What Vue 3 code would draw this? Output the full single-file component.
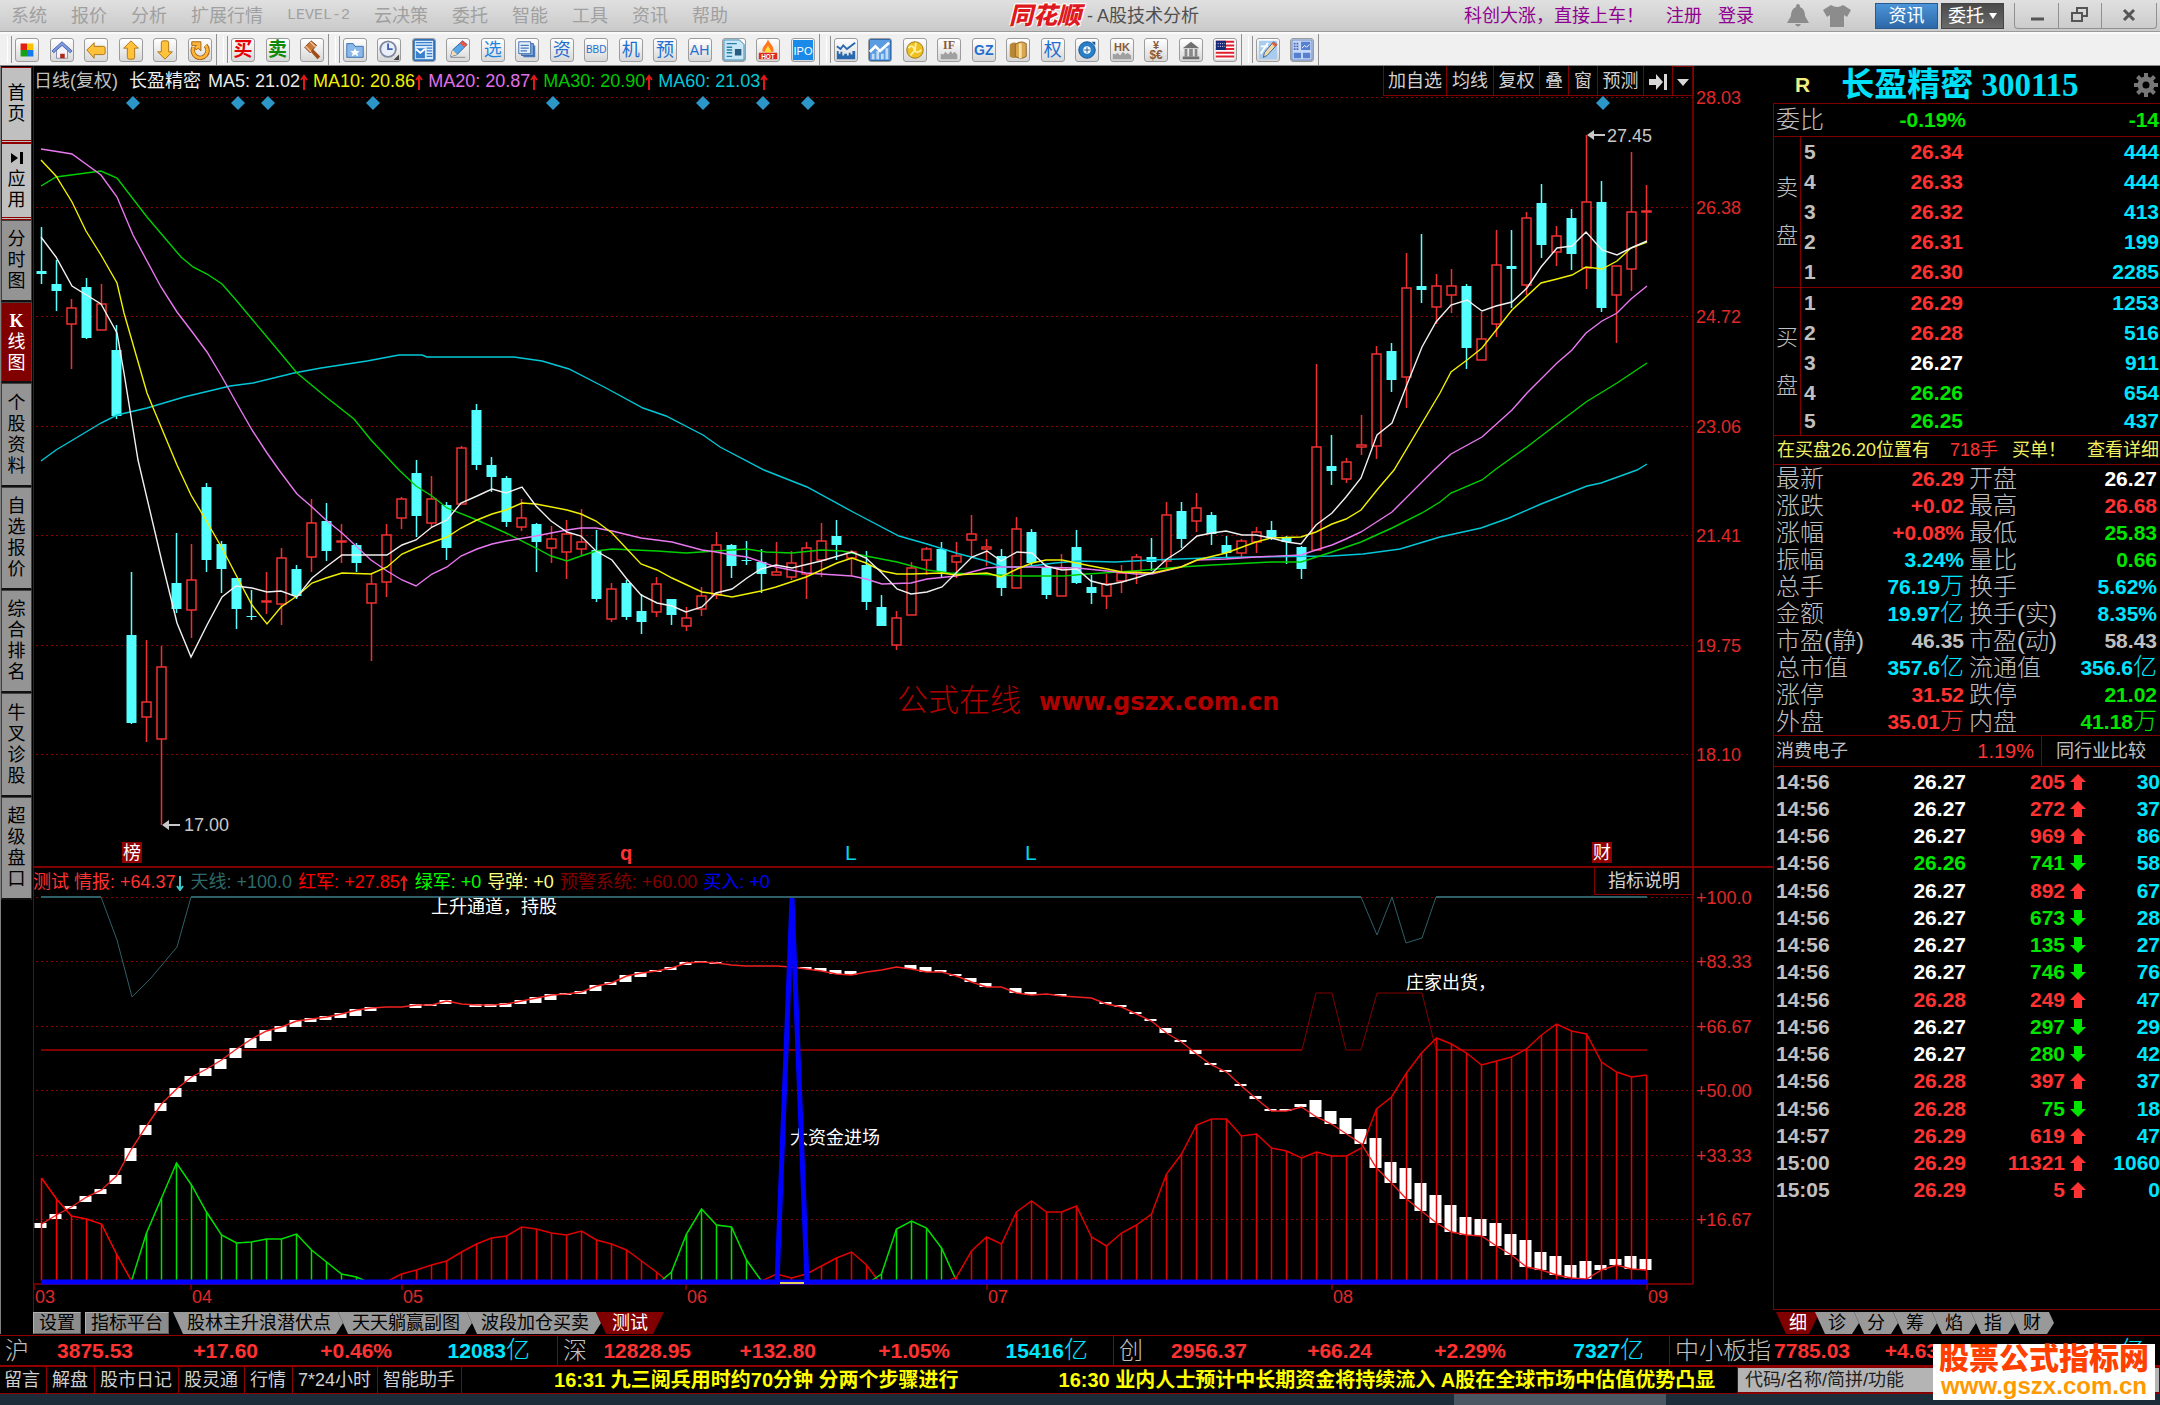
<script setup>
const menus = ['系统', '报价', '分析', '扩展行情', 'LEVEL-2', '云决策', '委托', '智能', '工具', '资讯', '帮助']

const blueText = '#1f6fd0'
const toolGroups = [
  {
    width: 197,
    items: [
      { label: '首页面板', art: '<path d="M5 5h7v7H5z" fill="#e02010"/><path d="M12 5h7v7h-7z" fill="#f8c400"/><path d="M5 12h7v7H5z" fill="#18a018"/><path d="M12 12h7v7h-7z" fill="#1878f0"/>' },
      { label: '主页', art: '<path d="M6 12v9h12v-9l-6-6z" fill="#f4f4fa" stroke="#8088a8"/><path d="M1 13 12 3l11 10-2 2-9-8-9 8z" fill="#7c9ae0" stroke="#4a62a8"/><path d="M10 16h5v5h-5z" fill="#b02818"/>' },
      { label: '后退', art: '<path d="M2 12 10 4v4h10q2 0 2 2v5q0 2-2 2H10v4z" fill="#ffc23a" stroke="#a87010"/>' },
      { label: '上翻', art: '<path d="M12 2 20 10h-4v10q0 2-2 2h-4q-2 0-2-2V10H4z" fill="#ffc23a" stroke="#a87010"/>' },
      { label: '下翻', art: '<path d="M12 22 20 14h-4V4q0-2-2-2h-4q-2 0-2 2v10H4z" fill="#ffc23a" stroke="#a87010"/>' },
      { label: '刷新', art: '<path d="M5 9a8 8 0 1 0 13-2" fill="none" stroke="#a06010" stroke-width="5"/><path d="M5 9a8 8 0 1 0 13-2" fill="none" stroke="#ffb53a" stroke-width="3"/><path d="M3 3h10v10l-3-3-2 2-2-3 2-2H3z" fill="#ffb53a" stroke="#a06010"/>' }
    ]
  },
  {
    width: 93,
    items: [
      { label: '买入', text: '买', color: '#e80000', bold: true, size: 19 },
      { label: '卖出', text: '卖', color: '#108808', bold: true, size: 19 },
      { label: '挂单', art: '<path d="m12 10 9 9-3 3-8-9z" fill="#a04c18"/><path d="M4 9 11 2l6 5-7 8z" fill="#c87838" stroke="#804018"/><path d="m5 8 6 6M10 3l6 6" stroke="#f0c090" stroke-width="1.5"/>' }
    ]
  },
  {
    width: 472,
    items: [
      { label: '自选', art: '<path d="M3 5h7l2 3h9v12H3z" fill="#8ab8e8" stroke="#3a70b0"/><path d="m12 10 1.500 3h3.500l-2.500 2.500 1 3.500-3.500-2-3.500 2 1-3.500L7 13h3.500z" fill="#fff"/>' },
      { label: '时钟', art: '<circle cx="11" cy="11" r="8.500" fill="#e8eefa" stroke="#8088a0" stroke-width="2"/><path d="M11 5v6h5" stroke="#4060b0" stroke-width="2" fill="none"/><path d="m23 17v6h-6z" fill="#444"/>' },
      { label: '版面', art: '<path d="M1 1h22v22H1z" fill="#dcecfc" stroke="#3070b8" stroke-width="2"/><path d="M3 4h18M3 7h18M15 10h6M15 13h6M15 16h6M15 19h6" stroke="#3a80cc" stroke-width="1.500"/><path d="M3 10h10v11H3z" fill="#3a80cc"/><path d="m3 11 5 4 5-4" stroke="#fff" fill="none" stroke-width="2"/>' },
      { label: '画笔', art: '<path d="m4 19 2-7L17 2l5 4L11 17z" fill="#58a8e8" stroke="#28609c"/><path d="m17 2 5 4-3 3-5-4z" fill="#e85848"/><path d="m4 19 2-7 5 5z" fill="#f6dcb0"/><path d="M4 20h16" stroke="#888"/>' },
      { label: '选股', text: '选', color: '#1f86e0', size: 18 },
      { label: '多股', art: '<path d="M8 7h13v13H8z" fill="#4a78b8"/><path d="M6 5h13v13H6z" fill="#80a8d8" stroke="#3a68a8"/><path d="M3 3h13v13H3z" fill="#e6f0fc" stroke="#3a68a8"/><path d="M5 7h9M5 10h9M5 13h7" stroke="#4a78b8" stroke-width="1.500"/>' },
      { label: '资金', text: '资', color: blueText, size: 18 },
      { label: 'BBD', text: 'BBD', color: blueText, size: 10 },
      { label: '机构', text: '机', color: blueText, size: 18 },
      { label: '预测', text: '预', color: blueText, size: 18 },
      { label: 'AH股', text: 'AH', color: blueText, size: 14 },
      { label: '新闻', art: '<path d="M1 1h17l5 5v17H1z" fill="#c8e6f6" stroke="#2880a8"/><path d="M4 5h11M4 9h6M4 12h6M4 15h6M4 19h6" stroke="#2880a8" stroke-width="1.500"/><path d="M13 11h7v7h-7z" fill="#285c80"/>' },
      { label: '热点', art: '<path d="M12 0c1 5 7 7 6 14H6C5 8 10 7 12 0z" fill="#ff7820"/><path d="M12 6c0 4 4 5 3 9H9c-1-4 3-5 3-9z" fill="#ffe040"/><path d="M2 15h20v7H2z" fill="#e02818"/><text x="12" y="21.500" font-size="7" font-weight="700" fill="#fff" text-anchor="middle" font-family="Liberation Sans">HOT</text>' },
      { label: 'IPO', art: '<path d="M1 1h22v22H1z" fill="#1a8ae8"/><text x="12" y="17" font-size="12" fill="#fff" text-anchor="middle" font-family="Liberation Sans">IPO</text>' }
    ]
  },
  {
    width: 403,
    items: [
      { label: '大盘', art: '<path d="m2 8 4 3 3-4 4 4 4-3 5-4" fill="none" stroke="#2868b0" stroke-width="2"/><path d="M2 13h2v3h2v-2h2v4h2v-2h3v2h2v-3h2v2h2v-4h3v9H2z" fill="#2868b0"/>' },
      { label: '走势', art: '<path d="M0 0h24v24H0z" fill="#5c9ce0" stroke="#3068a8" stroke-width="2"/><path d="M3 16h3v6H3zM8 13h3v9H8zM13 16h3v6h-3zM18 10h3v12h-3z" fill="#c0dcf8"/><path d="m1 14 6-6 5 5 10-9" fill="none" stroke="#fff" stroke-width="3"/>' },
      { label: '期货', art: '<circle cx="12" cy="12" r="9" fill="#f0c020" stroke="#9a7410"/><path d="M5 10q4-5 6 1t8 1M13 4l-1 8-5 6" stroke="#fff0a0" stroke-width="2" fill="none"/>' },
      { label: '股指期货', art: '<text x="12" y="11" font-size="13" font-weight="700" fill="#8a5a38" text-anchor="middle" font-family="Liberation Serif">IF</text><path d="M3 22v-6l3 1 2-3 3 3 3-4 2 3 2-2 3 3v5z" fill="#a0a0a0"/>' },
      { label: '国债', text: 'GZ', color: blueText, bold: true, size: 14 },
      { label: '基金', art: '<path d="M3 6q4-4 8-1v15q-4 2-8-1z" fill="#b88838"/><path d="M9 6q6-5 12-1v14q-6 4-12 0z" fill="#d8a850" stroke="#906020"/><path d="M13 5h3v16h-3z" fill="#f8e0a0"/>' },
      { label: '权证', text: '权', color: blueText, size: 18 },
      { label: '环球', art: '<circle cx="12" cy="12" r="9" fill="#2880c8" stroke="#185090"/><circle cx="12" cy="12" r="4" fill="#fff"/><path d="M12 9v6M9 12h6" stroke="#185090"/><path d="M17 3h4v4z" fill="#185090"/>' },
      { label: '港股', art: '<text x="12" y="13" font-size="12" font-weight="700" fill="#8a5a38" text-anchor="middle" font-family="Liberation Sans">HK</text><path d="M2 22v-6l3 1 2-2 3 3 3-4 3 3 2-2 4 3v4z" fill="#a0a0a0"/>' },
      { label: '外汇', art: '<text x="12" y="11" font-size="12" font-weight="700" fill="#8a5a38" text-anchor="middle" font-family="Liberation Sans">¥</text><text x="12" y="22" font-size="13" font-weight="700" fill="#8a5a38" text-anchor="middle" font-family="Liberation Sans">$€</text>' },
      { label: '宏观', art: '<path d="m3 10 9-7 9 7z" fill="#707070"/><path d="M5 11h3v8H5zM10 11h4v8h-4zM16 11h3v8h-3z" fill="#888"/><path d="M3 19h18v3H3z" fill="#707070"/>' },
      { label: '美股', art: '<path d="M2 2h20v20H2z" fill="#fff"/><path d="M2 3h20M2 7h20M2 11h20M2 15h20M2 19h20" stroke="#e02030" stroke-width="2.200"/><path d="M2 2h11v10H2z" fill="#182878"/><path d="M4 5h8M4 8h8" stroke="#fff" stroke-dasharray="1 1.500"/>' }
    ]
  },
  {
    width: 58,
    items: [
      { label: '画线', art: '<path d="M2 2h20v20H2z" fill="#a8ccf0"/><path d="M4 16l8-12M4 8h8" stroke="#fff" stroke-width="2"/><path d="m7 20 1-5L18 3l4 3-11 12z" fill="#f0d8a8" stroke="#386090"/><path d="m16 5 2-2 4 3-2 3z" fill="#e06040"/>' },
      { label: '布局', art: '<path d="M1 1h22v22H1z" fill="#c8d8f8" stroke="#5878b8"/><path d="M3 5h6M3 8h6M3 11h6" stroke="#4868b8" stroke-width="2" stroke-dasharray="2 1"/><path d="M11 3h10v9H11zM3 15h8v6H3zM13 15h8v6h-8z" fill="#5880d0"/><path d="m12 10 3-3 2 2 3-3" stroke="#fff" fill="none"/>' }
    ]
  }
]

const railTabs = [
  { text: '首页', kind: 'home', h: 76 },
  { text: '⏭应用', kind: 'home', h: 77 },
  { text: '分时图', kind: 'plain', h: 82 },
  { text: 'K线图', kind: 'active', h: 81 },
  { text: '个股资料', kind: 'plain', h: 104 },
  { text: '自选报价', kind: 'plain', h: 103 },
  { text: '综合排名', kind: 'plain', h: 103 },
  { text: '牛叉诊股', kind: 'plain', h: 104 },
  { text: '超级盘口', kind: 'plain', h: 103 }
]

const mas = [
  { text: 'MA5: 21.02', color: '#e8e8e8' },
  { text: 'MA10: 20.86', color: '#f0f000' },
  { text: 'MA20: 20.87', color: '#e070e8' },
  { text: 'MA30: 20.90', color: '#00c800' },
  { text: 'MA60: 21.03', color: '#00c8d8' }
]
const chartButtons = [
  { text: '加自选', w: 63 }, { text: '均线', w: 47 }, { text: '复权', w: 46 },
  { text: '叠', w: 29 }, { text: '窗', w: 29 }, { text: '预测', w: 46 }
]

const X = (i) => 41.5 + 15 * i
const mainGrid = [[97, '28.03'], [207, '26.38'], [316, '24.72'], [426, '23.06'], [535, '21.41'], [645, '19.75'], [754, '18.10']]
const diamonds = [133, 238, 268, 373, 553, 703, 763, 808, 1603]

// direction, high, body top, body bottom, low
const candleText = `c227,271,274,284 c260,284,291,311 r299,308,324,369 c278,287,338,339 r284,304,330,330 c325,350,416,419
c572,635,723,724 r640,702,717,742 r646,667,739,825 c533,583,609,613 r544,580,610,638 c483,487,560,572 c541,544,569,593
c578,578,609,629 c590,616,617,620 r572,601,602,614 r548,558,604,625 c565,569,596,599 r499,523,557,572 c503,521,551,561
r524,541,542,563 c543,545,563,572 r574,584,603,661 r524,535,582,597 r497,499,518,529 c460,473,516,537 r476,499,523,528
c502,505,548,560 r446,448,504,504 c404,410,465,470 c457,465,477,492 c476,478,522,527 r499,518,527,531 c523,524,542,572
r526,539,548,563 r520,534,552,579 r509,542,549,555 c530,550,599,602 r583,589,619,622 c580,583,617,620 c594,611,622,634
r577,584,612,617 c599,599,615,625 r607,618,626,631 r587,596,609,616 r532,545,595,599 c544,545,566,578 c541,560,561,565
c549,562,574,593 r542,572,575,575 r551,563,577,580 r542,548,574,599 r523,541,560,577 c520,536,545,560 r550,552,558,576
c551,565,602,610 c595,607,626,626 r611,618,645,650 r562,568,615,615 r547,549,560,575 c542,549,572,577 r542,556,562,578
r515,534,540,557 r539,547,549,566 c549,556,588,596 r517,529,588,588 c529,532,563,566 c565,567,595,599 r554,569,596,596
c530,547,583,584 c575,587,593,604 r574,584,596,609 r565,573,581,593 r554,557,571,584 c538,557,562,571 r502,515,561,569
c502,511,539,548 r493,508,521,532 c512,515,534,545 c536,545,553,558 r539,541,553,558 r527,532,542,553 c521,530,538,540
c536,537,542,564 c546,547,569,579 r364,447,550,550 c435,466,471,485 r458,462,479,483 r415,445,447,455 r346,354,446,459
c343,351,380,392 r253,288,377,408 c234,286,290,303 r274,286,307,324 r269,286,295,313 c284,286,348,369 r312,339,360,360
r230,265,324,337 c230,266,269,308 r212,218,285,295 c184,203,245,258 r226,236,252,266 c209,218,254,270 r135,202,268,289
c181,202,308,312 r266,266,295,343 r152,212,269,291 r185,211,212,241`
const candles = candleText.split(/\s+/).map((s, i) => {
  const [high, top, bottom, low] = s.slice(1).split(',').map(Number)
  return { up: s[0] === 'r', x: X(i), high, top, bottom, low }
})

const maLines = [
  { color: '#00c8d8', pts: '41,461 56,450 101,423 117,415 147,408 184,397 230,386 253,383 294,373 321,368 367,361 399,355 422,355 427,357 514,357 542,361 569,369 606,388 643,408 666,416 703,435 720,447 764,470 807,487 853,512 899,536 927,544 956,553 986,561 1002,567 1023,567 1055,563 1078,561 1115,562 1152,560 1207,558 1248,557 1331,556 1363,554 1400,549 1440,537 1481,528 1509,518 1541,504 1587,486 1601,483 1637,470 1647,464' },
  { color: '#00d000', pts: '41,186 56,177 101,171 117,178 147,217 181,257 193,267 207,274 222,284 236,300 267,337 297,373 326,397 354,419 371,440 399,470 416,486 432,496 447,508 477,520 506,533 536,548 551,556 567,561 581,556 596,551 612,549 657,551 686,553 716,551 747,549 766,552 792,553 821,550 842,551 866,556 897,562 927,570 950,573 996,575 1023,576 1064,576 1087,574 1133,571 1181,567 1212,565 1271,562 1301,562 1332,552 1361,542 1392,528 1422,513 1440,502 1451,493 1482,480 1496,469 1527,447 1557,424 1586,402 1617,383 1647,363' },
  { color: '#e878f0', pts: '41,149 60,152 72,154 101,175 117,197 133,235 161,287 177,312 193,333 207,352 222,377 236,402 252,430 267,453 279,470 297,494 312,507 326,520 342,533 371,560 387,571 402,580 416,586 432,574 447,567 461,556 477,549 492,544 506,541 536,536 551,533 567,530 581,528 596,528 612,531 641,538 672,542 702,550 716,552 732,555 747,557 776,567 806,573 821,574 852,576 866,579 882,584 911,583 927,579 956,576 987,568 1001,567 1032,567 1077,568 1107,571 1136,574 1152,574 1181,567 1197,560 1226,559 1256,557 1301,555 1316,550 1332,545 1346,539 1361,532 1392,512 1434,470 1451,454 1482,437 1512,410 1527,393 1557,363 1572,350 1586,333 1602,321 1617,313 1631,299 1647,286' },
  { color: '#f0f000', pts: '41,160 56,176 72,202 86,231 101,255 117,283 124,313 147,393 154,410 177,465 191,495 207,522 222,548 236,575 252,605 267,624 281,607 297,596 312,583 326,578 342,573 371,574 387,567 402,554 416,548 447,537 461,528 477,520 492,514 506,510 522,503 536,504 567,510 581,514 596,521 612,533 626,548 641,564 657,570 672,578 702,592 716,594 732,597 761,591 776,587 806,577 837,563 852,558 866,563 882,571 897,574 911,574 942,573 956,575 987,573 1001,577 1017,569 1032,563 1046,560 1062,560 1091,566 1107,569 1122,572 1152,573 1181,567 1197,560 1226,553 1256,542 1271,538 1301,537 1316,532 1332,524 1346,519 1361,510 1377,490 1394,470 1440,393 1451,372 1467,360 1482,348 1512,310 1541,283 1557,279 1572,275 1586,267 1602,269 1617,261 1631,248 1647,242' },
  { color: '#f0f0f0', pts: '41,237 56,257 72,286 101,304 117,333 124,373 138,460 162,562 177,623 191,657 207,625 222,597 236,586 252,588 267,592 281,591 297,597 312,578 326,567 342,555 357,555 387,555 402,545 416,540 432,527 447,520 461,503 477,496 492,489 506,493 522,487 536,506 551,521 567,532 581,536 596,551 612,560 626,578 641,595 657,603 672,606 686,612 702,607 716,593 732,589 747,578 761,569 776,565 792,568 821,561 852,552 866,558 882,573 897,589 911,594 927,592 942,587 956,573 972,557 987,551 1001,561 1017,552 1032,553 1046,566 1062,570 1077,569 1091,581 1107,585 1122,582 1136,578 1152,573 1167,559 1181,550 1197,536 1212,533 1226,531 1242,535 1256,535 1271,538 1287,542 1301,544 1316,525 1332,513 1346,497 1361,478 1377,435 1392,423 1406,387 1422,347 1436,322 1451,305 1467,300 1482,311 1496,306 1512,302 1527,288 1541,267 1557,248 1572,246 1586,232 1602,250 1617,255 1631,248 1647,241' }
]

const indicators = [
  { text: '测试 情报: +64.37', color: '#ff3232', arrow: 'down' },
  { text: '天线: +100.0', color: '#2f6a6a' },
  { text: '红军: +27.85', color: '#ff0000', arrow: 'up' },
  { text: '绿军: +0', color: '#00ff00' },
  { text: '导弹: +0', color: '#ffff80' },
  { text: '预警系统: +60.00', color: '#800000' },
  { text: '买入: +0', color: '#0000ff' }
]
const subGrid = [[897, '+100.0'], [961, '+83.33'], [1026, '+66.67'], [1090, '+50.00'], [1155, '+33.33'], [1219, '+16.67']]
const months = [[34, '03'], [191, '04'], [402, '05'], [686, '06'], [987, '07'], [1332, '08'], [1647, '09']]

// [top, bottom] of each white block
const blocks = `1223,1228 1214,1219 1206,1209 1196,1202 1189,1194 1175,1184 1148,1161 1125,1135 1103,1111 1088,1097 1076,1082 1068,1076
1059,1069 1048,1058 1038,1048 1030,1041 1026,1032 1020,1027 1018,1022 1016,1020 1013,1018 1009,1016 1007,1011 1006,1006 1006,1006
1004,1008 1004,1006 1000,1004 1003,1003 1004,1007 1004,1007 1003,1007 1000,1004 997,1003 994,1000 993,995 991,994 985,991 982,985
975,982 972,977 970,972 967,970 962,965 961,963 962,964 965,965 966,966 966,966 966,966 967,967 967,969 968,971 970,974 971,975
972,972 970,970 967,967 965,969 967,972 970,972 974,976 978,982 983,987 987,987 988,993 992,995 994,994 994,996 997,997 998,998
1002,1004 1005,1007 1012,1014 1019,1021 1028,1033 1040,1042 1050,1054 1063,1065 1070,1072 1084,1086 1096,1099 1109,1111 1109,1111
1104,1107 1100,1117 1111,1124 1118,1134 1129,1144 1138,1168 1162,1183 1168,1199 1183,1211 1195,1223 1205,1232 1217,1235 1219,1236
1223,1246 1234,1255 1240,1267 1252,1270 1256,1275 1265,1278 1261,1279 1265,1270 1259,1265 1256,1269 1259,1270`
  .split(/\s+/).map((s, i) => {
    const [top, bottom] = s.split(',').map(Number)
    return { x: X(i), top, bottom }
  })
const intelLine = blocks.map((b, i) => `${b.x},${i < 46 ? b.top + 1 : b.bottom}`).join(' ')

const humpData = [
  { color: '#ff0000', start: 0, first: null, last: 6, tops: [1178, 1199, 1216, 1219, 1224, 1254] },
  { color: '#00e000', start: 7, first: 6, last: 21.6, tops: [1233, 1198, 1163, 1185, 1212, 1235, 1243, 1242, 1239, 1239, 1234, 1250, 1262, 1274, 1277] },
  { color: '#e00000', start: 24, first: 23.1, last: 41.7, tops: [1274, 1270, 1265, 1261, 1252, 1244, 1238, 1236, 1227, 1229, 1233, 1235, 1231, 1240, 1244, 1250, 1261, 1272] },
  { color: '#00e000', start: 42, first: 41.3, last: 48, tops: [1272, 1234, 1209, 1225, 1227, 1260] },
  { color: '#e00000', start: 49, first: 48, last: 55.8, tops: [1274, 1278, 1274, 1266, 1258, 1252, 1265] },
  { color: '#00e000', start: 56, first: 55.3, last: 61, tops: [1274, 1229, 1221, 1228, 1248] },
  { color: '#e00000', start: 61, first: 60.5, last: null, tops: [1277, 1251, 1237, 1244, 1212, 1201, 1212, 1212, 1206, 1237, 1246, 1233, 1225, 1214, 1174, 1154, 1125, 1119, 1119, 1136, 1134, 1148, 1151, 1158, 1152, 1156, 1156, 1148, 1109, 1097, 1073, 1053, 1038, 1044, 1053, 1065, 1061, 1057, 1049, 1035, 1024, 1031, 1034, 1062, 1072, 1077, 1075] }
]
const humps = humpData.map((h) => {
  const pts = h.tops.map((y, k) => [X(h.start + k), y])
  const outline = [...pts]
  if (h.first !== null) outline.unshift([X(h.first), 1281])
  if (h.last !== null) outline.push([X(h.last), 1281])
  return { color: h.color, bars: pts.map(([x, y]) => `M${x} ${y}V1281`).join(''), line: outline.map((p) => p.join(',')).join(' ') }
})

const bookSides = [
  { name: ['卖', '盘'], rows: [[5, '26.34', 'up', 444], [4, '26.33', 'up', 444], [3, '26.32', 'up', 413], [2, '26.31', 'up', 199], [1, '26.30', 'up', 2285]] },
  { name: ['买', '盘'], rows: [[1, '26.29', 'up', 1253], [2, '26.28', 'up', 516], [3, '26.27', 'flat', 911], [4, '26.26', 'down', 654], [5, '26.25', 'down', 437]] }
]
const stats = [
  ['最新', '26.29', '', 'up', '开盘', '26.27', '', 'flat'],
  ['涨跌', '+0.02', '', 'up', '最高', '26.68', '', 'up'],
  ['涨幅', '+0.08%', '', 'up', '最低', '25.83', '', 'down'],
  ['振幅', '3.24%', '', 'cyan', '量比', '0.66', '', 'down'],
  ['总手', '76.19', '万', 'cyan', '换手', '5.62%', '', 'cyan'],
  ['金额', '19.97', '亿', 'cyan', '换手(实)', '8.35%', '', 'cyan'],
  ['市盈(静)', '46.35', '', 'grey', '市盈(动)', '58.43', '', 'grey'],
  ['总市值', '357.6', '亿', 'cyan', '流通值', '356.6', '亿', 'cyan'],
  ['涨停', '31.52', '', 'up', '跌停', '21.02', '', 'down'],
  ['外盘', '35.01', '万', 'up', '内盘', '41.18', '万', 'down']
]
const ticks = [
  ['14:56', '26.27', 'flat', 205, 'up', 30], ['14:56', '26.27', 'flat', 272, 'up', 37], ['14:56', '26.27', 'flat', 969, 'up', 86],
  ['14:56', '26.26', 'down', 741, 'down', 58], ['14:56', '26.27', 'flat', 892, 'up', 67], ['14:56', '26.27', 'flat', 673, 'down', 28],
  ['14:56', '26.27', 'flat', 135, 'down', 27], ['14:56', '26.27', 'flat', 746, 'down', 76], ['14:56', '26.28', 'up', 249, 'up', 47],
  ['14:56', '26.27', 'flat', 297, 'down', 29], ['14:56', '26.27', 'flat', 280, 'down', 42], ['14:56', '26.28', 'up', 397, 'up', 37],
  ['14:56', '26.28', 'up', 75, 'down', 18], ['14:57', '26.29', 'up', 619, 'up', 47], ['15:00', '26.29', 'up', 11321, 'up', 1060],
  ['15:05', '26.29', 'up', 5, 'up', 0]
]
const panelTabs = ['细', '诊', '分', '筹', '焰', '指', '财']
const indexes = [
  ['沪', '3875.53', '+17.60', '+0.46%', '12083'],
  ['深', '12828.95', '+132.80', '+1.05%', '15416'],
  ['创', '2956.37', '+66.24', '+2.29%', '7327'],
  ['中小板指', '7785.03', '+4.63', '+0.06%', '1217']
]
const footLinks = ['留言', '解盘', '股市日记', '股灵通', '行情', '7*24小时', '智能助手']
</script>

<template>
  <div class="app">
    <header class="titlebar">
      <nav class="menu">
        <a v-for="m in menus" :key="m" href="#" :class="{ latin: m === 'LEVEL-2' }">{{ m }}</a>
      </nav>
      <h1 class="title"><em>同花顺</em><span>- A股技术分析</span></h1>
      <div class="account">
        <a href="#" class="promo">科创大涨，直接上车！</a>
        <a href="#" class="reg">注册</a>
        <a href="#" class="login">登录</a>
        <button class="glyph" aria-label="通知">
          <svg width="24" height="24" viewBox="0 0 24 24"><path d="M12 0q2 0 2 3 5 2 5 9l4 7H1l4-7q0-7 5-9 0-3 2-3zM9 20h6q-3 5-6 0z" fill="#8c8c8c" /></svg>
        </button>
        <button class="glyph" aria-label="换肤">
          <svg width="30" height="24" viewBox="0 0 30 24"><path d="M9 1q6 4 12 0l8 5-4 7-3-2v12H8V11l-3 2-4-7z" fill="#8c8c8c" /></svg>
        </button>
        <button class="news-btn">资讯</button>
        <button class="trade-btn">委托 <i></i></button>
        <div class="win">
          <button aria-label="最小化"><svg width="16" height="16"><path d="M2 12h13" stroke="#555" stroke-width="3" /></svg></button>
          <button aria-label="还原"><svg width="18" height="16"><path d="M1 6h10v8H1zM6 6V1h10v8h-5" fill="none" stroke="#555" stroke-width="2" /></svg></button>
          <button aria-label="关闭"><svg width="14" height="14"><path d="m2 2 10 10M12 2 2 12" stroke="#555" stroke-width="3" /></svg></button>
        </div>
      </div>
    </header>

    <div class="toolbar">
      <div v-for="(g, gi) in toolGroups" :key="gi" class="group">
        <div class="icons" :style="{ width: g.width + 'px' }">
          <button v-for="t in g.items" :key="t.label" class="tool" :aria-label="t.label">
            <svg v-if="t.art" width="22" height="22" viewBox="0 0 24 24" v-html="t.art"></svg>
            <span v-else :style="{ color: t.color, fontSize: t.size + 'px', fontWeight: t.bold ? 700 : 400 }">{{ t.text }}</span>
          </button>
        </div>
      </div>
    </div>

    <main class="main">
      <nav class="rail">
        <button v-for="t in railTabs" :key="t.text" :class="t.kind" :style="{ height: t.h + 'px' }">
          <template v-for="c in Array.from(t.text)" :key="c">
            <svg v-if="c === '⏭'" width="12" height="18"><path d="m0 2 7 5-7 5z" /><path d="M9 1h3v12H9z" /></svg>
            <span v-else :class="{ serif: c === 'K' }">{{ c }}</span>
          </template>
        </button>
      </nav>

      <section class="charts">
        <div class="chart-head">
          <div class="legend">
            <span class="period">日线(复权)</span>
            <span class="name">长盈精密</span>
            <span v-for="m in mas" :key="m.text" class="ma" :style="{ color: m.color }">{{ m.text }}<svg width="9" height="18"><path d="M4 18V4M1 8l3-4 3 4" fill="none" stroke="#e01818" stroke-width="2" /></svg></span>
          </div>
          <div class="chart-tools">
            <button v-for="b in chartButtons" :key="b.text" :style="{ width: b.w + 'px' }">{{ b.text }}</button>
            <button class="end" aria-label="移到最右"><svg width="20" height="18"><path d="M1 6h7V1l7 8-7 8v-5H1zM16 1h3v16h-3z" fill="#d8d8d8" /></svg></button>
            <button class="more" aria-label="更多"><svg width="12" height="8"><path d="M0 1h12l-6 7z" fill="#d8d8d8" /></svg></button>
          </div>
        </div>

        <svg class="plot" viewBox="33 96 1740 770">
          <g class="grid"><path v-for="g in mainGrid" :key="g[1]" :d="`M36 ${g[0]}H1692`" /></g>
          <g class="axis"><text v-for="g in mainGrid" :key="g[1]" x="1696" :y="g[0] + 7">{{ g[1] }}</text></g>
          <path class="frame" d="M1693 66V866" />
          <path v-for="d in diamonds" :key="d" :d="`M${d} 96l7 7-7 7-7-7z`" fill="#2c96c8" />
          <g v-for="c in candles" :key="c.x" :class="c.up ? 'rise' : 'fall'">
            <path :d="`M${c.x} ${c.high}V${c.top}M${c.x} ${c.bottom}V${c.low}`" />
            <rect :x="c.x - (c.up ? 4.5 : 5)" :y="c.top" :width="c.up ? 9 : 10" :height="c.bottom - c.top" />
          </g>
          <polyline v-for="l in maLines" :key="l.color" class="ma-line" :points="l.pts" :stroke="l.color" />
          <g fill="#c8c8c8">
            <path d="M1587 135l7-5v4h11v2h-11v4zM162 825l7-5v4h11v2h-11v4z" />
            <text x="1607" y="142">27.45</text>
            <text x="184" y="831">17.00</text>
          </g>
          <text class="mark-cn" x="897" y="711">公式在线</text>
          <text class="mark-url" x="1039" y="710">www.gszx.com.cn</text>
          <path d="M122 842h20v21h-20zM1592 842h20v21h-20z" fill="#900000" />
          <g class="badge"><text x="132" y="859">榜</text><text x="1602" y="859">财</text></g>
          <text class="q" x="620" y="860">q</text>
          <g fill="#00d8e8" class="l"><text x="845" y="860">L</text><text x="1025" y="860">L</text></g>
        </svg>

        <div class="sub-head">
          <div class="indicators">
            <span v-for="t in indicators" :key="t.text" :style="{ color: t.color }">{{ t.text }}<svg v-if="t.arrow" width="9" height="18"><path v-if="t.arrow === 'up'" d="M4 18V4M1 8l3-4 3 4" fill="none" stroke="#e01818" stroke-width="2" /><path v-else d="M4 3v14M1 13l3 4 3-4" fill="none" stroke="#40c8c8" stroke-width="2" /></svg></span>
          </div>
          <button class="explain">指标说明</button>
        </div>

        <svg class="plot" viewBox="33 895 1740 413">
          <g class="grid"><path v-for="g in subGrid" :key="g[1]" :d="`M36 ${g[0]}H1692`" /></g>
          <g class="axis"><text v-for="g in subGrid" :key="g[1]" x="1696" :y="g[0] + 7">{{ g[1] }}</text></g>
          <path class="frame" d="M1693 866V1284M33 1284H1693" />
          <g class="months">
            <template v-for="m in months" :key="m[1]"><path :d="`M${m[0]} 1284v6`" /><text :x="m[0] + 1" y="1303">{{ m[1] }}</text></template>
          </g>
          <path class="sky" d="M41 897H101L117 940 132 997 151 978 177 947 191 897H1361L1377 935 1392 897 1406 943 1422 938 1436 897H1647" />
          <path class="sky bold" d="M41 897H101M191 897H1361M1436 897H1647" />
          <path class="warn bold" d="M41 1050H1302M1436 1050H1647" />
          <path class="warn" d="M1302 1050 1316 993H1332L1346 1050H1361L1377 993H1422L1436 1050" />
          <g fill="#fff">
            <rect v-for="b in blocks" :key="b.x" :x="b.x - 7" :y="b.top" width="12" :height="b.bottom - b.top" />
          </g>
          <polyline class="intel" :points="intelLine" />
          <g v-for="(h, i) in humps" :key="i" fill="none" :stroke="h.color" stroke-width="1.5">
            <path :d="h.bars" /><polyline :points="h.line" />
          </g>
          <g class="note"><text x="431" y="913">上升通道，持股</text><text x="1406" y="989">庄家出货，</text><text x="790" y="1144">大资金进场</text></g>
          <path d="M41 1282H1648" class="buy" />
          <path d="M777 1282 792 898 807 1282" class="buy" />
          <path d="M780 1283H804" stroke="#e0d060" stroke-width="2" />
        </svg>

        <nav class="tabs">
          <button class="flat-tab">设置</button>
          <button class="flat-tab">指标平台</button>
          <button class="slant wide">股林主升浪潜伏点</button>
          <button class="slant wide">天天躺赢副图</button>
          <button class="slant wide">波段加仓买卖</button>
          <button class="slant wide on">测试</button>
        </nav>
      </section>

      <aside class="panel">
        <div class="stock"><span class="r">R</span><h2>长盈精密 300115</h2>
          <button aria-label="设置"><svg width="24" height="24" viewBox="-12 -12 24 24"><circle r="6" fill="none" stroke="#777" stroke-width="5" /><path d="M0-12V-7M0 12V7M-12 0h5M12 0H7M-8.500-8.500-5-5M8.500 8.500 5 5M-8.500 8.500-5 5M8.500-8.500 5-5" stroke="#777" stroke-width="4" /></svg></button>
        </div>
        <div class="panel-body">
          <div class="ratio"><span class="cn">委比</span><b class="down">-0.19%</b><b class="down">-14</b></div>
          <div v-for="s in bookSides" :key="s.name[0]" class="side">
            <div class="side-name"><span v-for="n in s.name" :key="n">{{ n }}</span></div>
            <table>
              <tbody>
                <tr v-for="r in s.rows" :key="r[0]">
                  <th>{{ r[0] }}</th><td class="p" :class="r[2]">{{ r[1] }}</td><td class="v">{{ r[3] }}</td>
                </tr>
              </tbody>
            </table>
          </div>
          <div class="notice"><span>在买盘26.20位置有</span><span class="up hand">718手</span><span>买单！</span><a href="#">查看详细</a></div>
          <table class="stats">
            <tbody>
              <tr v-for="s in stats" :key="s[0]">
                <th>{{ s[0] }}</th><td :class="s[3]">{{ s[1] }}<i v-if="s[2]">{{ s[2] }}</i></td>
                <th>{{ s[4] }}</th><td :class="s[7]">{{ s[5] }}<i v-if="s[6]">{{ s[6] }}</i></td>
              </tr>
            </tbody>
          </table>
          <div class="industry"><span>消费电子</span><span class="up">1.19%</span><button>同行业比较</button></div>
          <table class="ticks">
            <tbody>
              <tr v-for="(t, i) in ticks" :key="i">
                <th>{{ t[0] }}</th><td class="tp" :class="t[2]">{{ t[1] }}</td><td class="tv" :class="t[4]">{{ t[3] }}</td>
                <td class="ta"><svg width="18" height="18"><path v-if="t[4] === 'up'" d="M9 1 17 9h-4v8H5V9H1z" fill="#ff3232" /><path v-else d="M9 17 17 9h-4V1H5v8H1z" fill="#00e600" /></svg></td>
                <td class="cyan tn">{{ t[5] }}</td>
              </tr>
            </tbody>
          </table>
        </div>
        <nav class="tabs ptabs">
          <button v-for="(t, i) in panelTabs" :key="t" class="slant" :class="{ on: i === 0 }">{{ t }}</button>
        </nav>
      </aside>
    </main>

    <div class="indexes">
      <div v-for="x in indexes" :key="x[0]" :class="{ long: x[0].length > 1 }">
        <span class="cn">{{ x[0] }}</span><b>{{ x[1] }}</b><b>{{ x[2] }}</b><b>{{ x[3] }}</b><b class="cyan">{{ x[4] }}<i>亿</i></b>
      </div>
    </div>

    <footer class="foot">
      <nav><a v-for="f in footLinks" :key="f" href="#">{{ f }}</a></nav>
      <div class="news">
        <a href="#">16:31 九三阅兵用时约70分钟 分两个步骤进行</a>
        <a href="#">16:30 业内人士预计中长期资金将持续流入 A股在全球市场中估值优势凸显</a>
      </div>
      <input type="text" aria-label="搜索" placeholder="代码/名称/简拼/功能" />
    </footer>
    <div class="desk"><span></span></div>
    <div class="brand"><strong>股票公式指标网</strong><span>www.gszx.com.cn</span></div>
  </div>
</template>

<style>
body { background: #000; }
</style>

<style scoped>
.app { position: relative; font: 18px/20px "Liberation Sans", "Noto Sans CJK SC", sans-serif; color: #c0c0c0; background: #000; overflow: hidden; }
.app * { box-sizing: border-box; }
button, input { font: inherit; color: inherit; background: none; border: 0; padding: 0; margin: 0; border-radius: 0; white-space: nowrap; }
a { color: inherit; text-decoration: none; white-space: nowrap; }
i { font-style: normal; }
table { border-collapse: collapse; border-spacing: 0; width: 100%; }
th, td { padding: 0; }
.up { color: #ff3232; }
.down { color: #00e600; }
.flat { color: #fff; }
.cyan { color: #00e5ff; }
.grey { color: #c0c0c0; }

.titlebar { display: flex; align-items: center; height: 32px; background: linear-gradient(#e0e0e0, #cacaca); border-bottom: 1px solid #9a9a9a; }
.menu { flex: 1; display: flex; gap: 24px; padding-left: 11px; color: #a0a0a0; }
.latin { font-family: "Liberation Mono", monospace; font-size: 15px; }
.title { display: flex; align-items: center; gap: 6px; margin: 0; font-size: 18px; font-weight: 400; color: #505050; white-space: nowrap; }
.title em { font-size: 24px; line-height: 28px; font-weight: 900; color: #e01820; text-shadow: 1px 1px #fff, -1px -1px #fff, 1px -1px #fff; }
.account { display: flex; align-items: center; justify-content: flex-end; width: 961px; color: #900090; }
.reg { margin: 0 16px 0 22px; }
.login { margin-right: 32px; }
.glyph { margin-right: 12px; height: 24px; }
.glyph svg { display: block; }
.news-btn, .trade-btn { height: 26px; width: 63px; color: #fff; border: 1px solid #2a5a8c; background: linear-gradient(#4c94d8, #2c68a8); margin-left: 3px; }
.news-btn { margin-left: 11px; }
.trade-btn { border-color: #444; background: linear-gradient(#4a4a4a, #6a6a6a); }
.trade-btn i { display: inline-block; border: 4px solid transparent; border-top: 6px solid #fff; border-bottom: 0; vertical-align: 3px; }
.win { display: flex; margin: 0 3px 0 10px; height: 26px; border: 1px solid #909090; border-top: 0; border-radius: 0 0 4px 4px; }
.win button { width: 43px; display: grid; place-items: center; }
.win button + button { border-left: 1px solid #909090; }
.win button:last-child { width: 55px; }

.toolbar { display: flex; height: 34px; background: #f0f0f0; border-top: 2px solid #fafafa; border-bottom: 1px solid #888; padding-left: 1px; }
.group { position: relative; padding: 0 4px 0 14px; border-right: 1px solid #909090; display: flex; align-items: center; }
.group::before { content: ""; position: absolute; left: 6px; top: 2px; bottom: 2px; width: 3px; border-right: 1px solid #909090; border-left: 1px solid #fff; }
.icons { display: flex; justify-content: space-between; }
.tool { width: 24px; height: 24px; border: 1px solid #9c9c9c; border-radius: 3px; background: linear-gradient(#fff, #d8d8d8); display: grid; place-items: center; line-height: 20px; overflow: hidden; }
.tool svg { display: block; }

.main { display: flex; background: #000; }
.rail { width: 34px; flex: none; border-left: 1px solid #808080; border-right: 1px solid #800000; display: flex; flex-direction: column; padding-top: 1px; color: #000; }
.rail button { width: 31px; flex: none; display: flex; flex-direction: column; align-items: center; justify-content: center; background: #949494; border: 1px solid #404040; border-bottom: 2px solid #101010; }
.rail button.home { background: #c0c0c0; border: 1px solid #900000; border-bottom: 3px double #900000; }
.rail button.active { background: #800000; color: #fff; }
.rail span { line-height: 21px; }
.serif { font: bold 18px/21px "Liberation Serif", serif; }

.charts { flex: 1; min-width: 0; margin-left: -1px; }
.chart-head { display: flex; justify-content: space-between; height: 30px; padding-right: 79px; }
.legend { display: flex; align-items: center; gap: 4px; padding-left: 1px; white-space: nowrap; }
.period { width: 91px; }
.name { width: 75px; color: #f0f0f0; }
.ma, .indicators span { display: inline-flex; align-items: center; }
.chart-tools { display: flex; border-right: 1px solid #800000; color: #d0d0d0; }
.chart-tools button { border: solid #800000; border-width: 0 0 1px 1px; }
.chart-tools svg { vertical-align: middle; }
.chart-tools .end { width: 29px; }
.chart-tools .more { width: 21px; border-width: 1px 0 1px 1px; }
.plot { display: block; width: 100%; height: auto; overflow: visible; font-size: 18px; }
.grid path { stroke: #900000; stroke-width: 1; stroke-dasharray: 2 3; transform: translateY(0.5px); }
.axis text { fill: #e02828; }
.frame { stroke: #900000; stroke-width: 1.5; fill: none; }
.rise path, .rise rect { stroke: #f03030; stroke-width: 1.5; fill: #000; }
.fall path { stroke: #54ffff; stroke-width: 1.5; }
.fall rect { fill: #54ffff; }
.ma-line { fill: none; stroke-width: 1.4; }
.mark-cn { font-size: 31px; font-weight: 300; fill: #b00000; }
.mark-url { font: bold 24px "DejaVu Sans", sans-serif; fill: #b00000; }
.badge text { fill: #fff; text-anchor: middle; }
.q { fill: #ff3232; font-weight: 700; font-size: 20px; }
.l { font-size: 21px; }
.sub-head { display: flex; justify-content: space-between; height: 29px; padding-right: 79px; border-top: 2px solid #800000; }
.indicators { display: flex; align-items: center; gap: 6px; white-space: nowrap; }
.explain { width: 100px; border: 1px solid #800000; border-top: 0; color: #d0d0d0; }
.months text { fill: #e02828; }
.months path { stroke: #900000; stroke-width: 1.5; }
.sky, .warn, .intel { fill: none; stroke-width: 1; }
.sky { stroke: #2f6068; }
.warn { stroke: #800000; }
.sky.bold, .warn.bold { stroke-width: 2; }
.intel { stroke: #f02020; stroke-width: 1.4; }
.note text { fill: #fff; }
.buy { fill: none; stroke: #0000ff; stroke-width: 5; stroke-linejoin: bevel; }

.tabs { display: flex; height: 26px; padding-top: 4px; color: #000; }
.flat-tab { background: #8c8c8c; border: 1px solid; border-color: #b0b0b0 #606060 #606060 #b0b0b0; padding: 0 5px; margin-right: 4px; }
.slant { width: 44px; margin-right: -5px; background: #999; clip-path: polygon(0 0, calc(100% - 5px) 0, 100% 50%, calc(100% - 7px) 100%, 10px 100%); }
.slant.wide { width: auto; padding: 0 12px 0 14px; }
.flat-tab + .slant { margin-left: 0; }
.slant.on { background: #800000; color: #fff; clip-path: polygon(0 0, 100% 0, calc(100% - 11px) 100%, 10px 100%); }
.slant.wide.on { padding: 0 16px; }

.panel { flex: none; width: 387px; display: flex; flex-direction: column; font-size: 21px; }
.stock { display: flex; align-items: center; height: 37px; padding: 0 2px 0 22px; }
.r { color: #f0f080; font-size: 21px; font-weight: 700; }
.stock h2 { margin: 0 auto 0 31px; font: bold 33px/36px "Liberation Serif", "Noto Sans CJK SC", serif; color: #00e0f8; white-space: nowrap; }
.stock button, .stock svg { display: block; }
.panel-body { flex: 1; border: solid #800000; border-width: 1px 0 1px 1px; }
.cn { font-size: 24px; font-weight: 300; }
.ratio { display: flex; align-items: center; height: 32px; padding: 0 1px 0 2px; }
.ratio b:nth-child(2) { width: 142px; text-align: right; }
.ratio b:last-child { margin-left: auto; }
.side { display: flex; border-top: 1px solid #800000; }
.side-name { width: 27px; border-right: 1px solid #800000; display: flex; flex-direction: column; justify-content: center; align-items: center; gap: 24px; font-size: 22px; line-height: 24px; font-weight: 300; }
.side table { flex: 1; }
.side tr { height: 30px; }
.side:nth-child(3) tr:last-child { height: 27px; }
.side th { width: 16px; text-align: left; padding-left: 3px; }
.side th, .side td { line-height: 26px; padding-bottom: 1px; }
.p, .v { font-weight: 700; text-align: right; }
.p { width: 146px; }
.v { color: #00e5ff; padding-right: 1px; }
.notice { display: flex; align-items: center; height: 30px; border: solid #800000; border-width: 1px 0; color: #f0f060; font-size: 18px; padding: 0 1px 0 3px; white-space: nowrap; }
.hand { margin: 0 14px 0 20px; }
.notice a { margin-left: auto; }
.stats tr { height: 27px; }
.stats th { font-size: 24px; font-weight: 300; line-height: 26px; text-align: left; vertical-align: middle; padding-left: 2px; white-space: nowrap; width: 95px; }
.stats td { font-weight: 700; line-height: 26px; text-align: right; vertical-align: middle; white-space: nowrap; padding-right: 3px; }
.stats i, .indexes i { font-size: 24px; font-weight: 300; line-height: 20px; }
.industry { display: flex; align-items: center; height: 32px; border: solid #800000; border-width: 1px 0; font-size: 18px; padding-left: 2px; }
.industry .up { margin-left: auto; margin-right: 7px; font-size: 20px; }
.industry button { width: 119px; height: 30px; border-left: 1px solid #800000; }
.ticks { height: 436px; margin-top: 1px; }
.ticks th, .ticks td { line-height: 24px; font-weight: 700; text-align: right; }
.ticks th { text-align: left; padding-left: 2px; width: 80px; }
.tp { width: 112px; }
.tv { width: 99px; }
.ticks .ta { width: 26px; }
.ta svg { display: block; margin-left: 4px; }
.ptabs { padding: 2px 0 0 3px; height: 24px; font-size: 18px; }

.indexes { display: grid; grid-template-columns: 557fr 556fr 556fr 491fr; height: 32px; border-top: 1px solid #900000; border-bottom: 2px solid #900000; font-size: 21px; margin-top: 1px; }
.indexes > div { display: grid; grid-template-columns: 36px 92px 125px 134px 138px; align-items: center; padding-left: 5px; white-space: nowrap; }
.indexes > div + div { border-left: 1px solid #900000; }
.indexes > .long { grid-template-columns: 98px 77px 88px 107px 99px; }
.indexes b { text-align: right; color: #ff3232; }
.indexes b.cyan { color: #00e5ff; }
.foot { display: flex; height: 27px; border-bottom: 1px solid #900000; }
.foot nav { display: flex; color: #d0d0d0; }
.foot nav a { padding: 3px 6px 0 5px; border-right: 1px solid #900000; }
.foot nav a:first-child { padding-left: 4px; }
.news { flex: 1; display: flex; gap: 100px; padding-left: 92px; font-size: 20px; line-height: 27px; font-weight: 700; color: #ff0; overflow: hidden; }
.foot input { width: 423px; background: #b4b4b4; border: 1px solid #800000; padding-left: 7px; }
.foot input::placeholder { color: #202020; opacity: 1; }
.desk { height: 11px; background: #1c2c38; padding-left: 1454px; }
.desk span { display: block; width: 212px; height: 11px; background: #4b5864; }
.brand { position: absolute; right: 5px; bottom: 5px; width: 222px; height: 56px; background: #fff; display: flex; flex-direction: column; align-items: center; font-weight: 700; }
.brand strong { font-size: 30px; line-height: 30px; font-weight: 900; color: #ff4000; }
.brand span { font-size: 24px; line-height: 24px; color: #ff9900; }
</style>
